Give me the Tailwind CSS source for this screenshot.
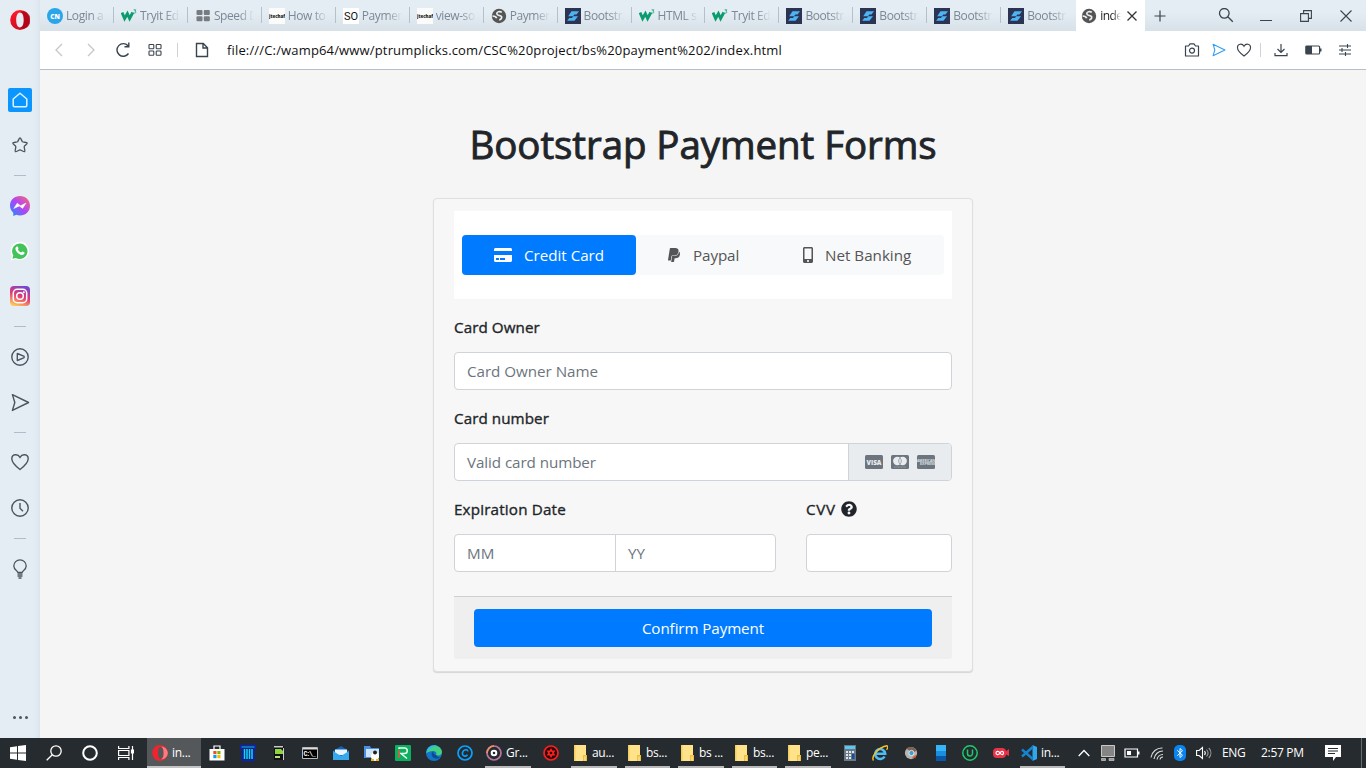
<!DOCTYPE html>
<html lang="en">
<head>
<meta charset="utf-8">
<title>index</title>
<script src="https://cdn.jsdelivr.net/npm/@tailwindcss/browser@4"></script>
</head>
<body class="w-[1366px] h-[768px] overflow-hidden flex flex-col bg-[#e5edf4] font-['Open_Sans','Noto_Sans',sans-serif] text-[#212529]">
<svg class="hidden">
  <symbol id="w3" viewBox="0 0 16 16"><path d="M1 4.500 3.600 10.500l2.800-4.800 2.200 4.800 3.200-6" fill="none" stroke="#0a9c6e" stroke-width="2.900"/><path d="M12.600 1.800h2.200l-1 1.300c1.400 0 1.400 2-.2 2-.6 0-1-.2-1.200-.6" fill="none" stroke="#0a9c6e" stroke-width=".8"/></symbol>
  <symbol id="globe" viewBox="0 0 16 16"><circle cx="8" cy="8" r="7.200" fill="#555"/><path d="M10.800 4.300c-2-1.200-5-.6-5 1.200 0 2 2.200 1.700 4 2.500 1.800 1 .8 3.500-1.600 3.800M1.500 8c2 0 3.800.6 4.200 2.300" fill="none" stroke="#e8edf2" stroke-width="1.700"/></symbol>
  <symbol id="bs" viewBox="0 0 16 16"><path d="M0 0h16v16H0z" fill="#2b3553"/><path d="M6.500 3.300h7.500L11.500 6.500H9.300L8 8.200H3.200zM8.300 8.200h4.700l-3.500 4.500H2.200l2-2.700H7z" fill="#4cb3f5"/></symbol>
  <symbol id="folder" viewBox="0 0 16 18"><path d="M1 1h12v16H1z" fill="#ffe28a"/><path d="M1 1h1.500v16H1z" fill="#f5cf5c"/><path d="M10 11h4v6h-4z" fill="#eebf3d"/><path d="M11.500 12.500h1V17h-1z" fill="#fff0b8"/></symbol>
  <symbol id="heart" viewBox="0 0 20 20"><path d="M10 17.500C6 14.500 1.800 11 1.800 6.800c0-4.800 6-5.400 8.200-1.500 2.200-3.900 8.200-3.300 8.200 1.500 0 4.200-4.200 7.700-8.200 10.700z" fill="none" stroke="currentColor" stroke-width="1.400"/></symbol>
  <symbol id="send" viewBox="0 0 20 20"><path d="M1.500 1.700 18.500 10l-17 8.300L4 10z" fill="none" stroke="currentColor" stroke-width="1.500" stroke-linejoin="round"/></symbol>
</svg>

<div class="flex h-[738px]">
  <!-- Sidebar -->
  <aside class="w-10 shrink-0 flex flex-col items-center bg-[#e5edf4] shadow-[inset_-6px_0_6px_-5px_#d5dfe8] text-[#4a5560]">
    <div class="h-[77px] pt-[10px]"><svg class="w-5 h-5" viewBox="0 0 20 20"><defs><linearGradient id="og" x1="0" y1="0" x2="0" y2="1"><stop offset="0" stop-color="#ff1b2d"/><stop offset="1" stop-color="#d00d1f"/></linearGradient></defs><path d="M10 0a9.800 10 0 1 0 0 20 9.800 10 0 0 0 0-20zm0 2.600c2.500 0 3.800 3.200 3.800 7.400s-1.300 7.400-3.800 7.400S6.200 14.200 6.200 10 7.500 2.600 10 2.600z" fill="url(#og)" fill-rule="evenodd"/><path d="M10 2.600c3 0 3.800 3.200 3.800 7.400S12.800 17.400 10 17.400c2 2 5 1.600 7 .2A10 10 0 0 0 17 2.400C15 .8 12 .6 10 2.600z" fill="#a00014" opacity=".7"/></svg></div>
    <div class="h-[46px] flex items-center"><svg class="w-6 h-6" viewBox="0 0 24 24"><rect width="24" height="24" rx="2" fill="#0b96ff"/><path d="M12 5.200 5.200 11v6.600c0 .8.400 1.200 1.200 1.200h11.200c.8 0 1.200-.4 1.200-1.200V11z" fill="none" stroke="#dff1ff" stroke-width="1.500" stroke-linejoin="round"/></svg></div>
    <div class="h-[44px] flex items-center"><svg class="w-[18px] h-[18px]" viewBox="0 0 20 20"><path d="M10 2c1 0 1.800 3.500 2.700 4.300.9.700 5 .6 5.300 1.500.3 1-3 3-3.300 4-.3 1.200 1.300 4.900.5 5.500-.9.600-4-1.900-5.200-1.900s-4.300 2.500-5.200 1.900c-.8-.6.800-4.300.5-5.500-.3-1-3.600-3-3.300-4 .3-.9 4.400-.8 5.300-1.500C8.200 5.500 9 2 10 2z" fill="none" stroke="currentColor" stroke-width="1.500" stroke-linejoin="round"/></svg></div>
    <div class="h-[16px] pt-[8px]"><div class="w-3 h-px bg-[#aebccc]"></div></div>
    <div class="h-[46px] flex items-center"><svg class="w-5 h-5" viewBox="0 0 20 20"><defs><linearGradient id="mg" x1="1" y1="0" x2="0" y2="1"><stop offset="0" stop-color="#ff6a6a"/><stop offset=".5" stop-color="#b045f5"/><stop offset="1" stop-color="#1590ff"/></linearGradient></defs><path d="M10 0C4.400 0 0 4 0 9.600c0 3 1.200 5.500 3.300 7.200V20l3-1.200c1.200.4 2.400.6 3.700.6 5.600 0 10-4 10-9.700S15.600 0 10 0z" fill="url(#mg)"/><path d="m3.800 12.500 3.400-5.300 3.300 2.500 5.500-2.600-3.400 5.300-3.300-2.500z" fill="#fff" stroke="#fff" stroke-width=".5"/></svg></div>
    <div class="h-[44px] flex items-center"><svg class="w-5 h-5" viewBox="0 0 20 20"><path d="M.8 19.400 2 14.700A9.200 9.200 0 1 1 5.500 18z" fill="#fff"/><path d="m2.400 17.800.9-3.400a7.700 7.700 0 1 1 2.600 2.500z" fill="#43c45a"/><path d="M7 5.500c.6-.3 1 .1 1.500 1.500.2.700-.7 1-.5 1.600.6 1.300 1.700 2.300 3.100 2.900.6.100.9-1.100 1.500-.9 1.700.8 2.100 1 2 1.500-.3 1.500-1.700 2.100-3 1.900-3-.6-5.900-3.400-6.200-6.200C5.400 6.700 6.200 5.700 7 5.500z" fill="#fff"/></svg></div>
    <div class="h-[45px] flex items-center"><svg class="w-5 h-5" viewBox="0 0 20 20"><defs><linearGradient id="ig" x1=".7" y1="0" x2=".3" y2="1"><stop offset="0" stop-color="#7346d0"/><stop offset=".5" stop-color="#e23a74"/><stop offset="1" stop-color="#ffc65c"/></linearGradient></defs><rect width="20" height="20" rx="4" fill="url(#ig)"/><g fill="none" stroke="#fff" stroke-width="1.500"><rect x="3.300" y="3.300" width="13.400" height="13.400" rx="3.800"/><circle cx="10" cy="10" r="3.300"/></g><circle cx="13.800" cy="6.200" r="1" fill="#fff"/></svg></div>
    <div class="h-[16px] pt-[8px]"><div class="w-3 h-px bg-[#aebccc]"></div></div>
    <div class="h-[45px] flex items-center"><svg class="w-5 h-5" viewBox="0 0 20 20" fill="none" stroke="currentColor" stroke-width="1.400"><circle cx="10" cy="10" r="8.200"/><path d="M7.300 6.500v7l6.400-2.700c.7-.4.7-1.200 0-1.600z" stroke-linejoin="round"/></svg></div>
    <div class="h-[46px] flex items-center"><svg class="w-[19px] h-[19px]"><use href="#send"/></svg></div>
    <div class="h-[15px] pt-[7px]"><div class="w-3 h-px bg-[#aebccc]"></div></div>
    <div class="h-[44px] flex items-center"><svg class="w-5 h-5"><use href="#heart"/></svg></div>
    <div class="h-[47px] flex items-center"><svg class="w-5 h-5" viewBox="0 0 20 20" fill="none" stroke="currentColor" stroke-width="1.400"><circle cx="10" cy="10" r="8.200"/><path d="M10 5v5.300l3 3"/></svg></div>
    <div class="h-[15px] pt-[7px]"><div class="w-3 h-px bg-[#aebccc]"></div></div>
    <div class="h-[46px] flex items-center"><svg class="w-5 h-5" viewBox="0 0 20 20" fill="none" stroke="currentColor" stroke-width="1.300"><path d="M7.800 13.300c0-1.300-4-2.500-4-6.300a6.200 6.200 0 0 1 12.400 0c0 3.800-4 5-4 6.300zM7.500 15h5M7.500 17h5M8.500 19h3"/></svg></div>
    <div class="mt-auto h-[41px] flex items-center gap-[3px]"><i class="size-[3px] rounded-full bg-[#4a5560]"></i><i class="size-[3px] rounded-full bg-[#4a5560]"></i><i class="size-[3px] rounded-full bg-[#4a5560]"></i></div>
  </aside>

  <div class="w-[1326px] flex flex-col">
    <!-- Tabs -->
    <div id="tabs" class="h-[31px] flex bg-linear-to-b from-[#e5edf4] from-40% to-[#d8e0e8] text-[12px] text-[#7b8895]"></div>

    <!-- Address bar -->
    <div class="h-[39px] bg-white border-b border-[#b4bfca] flex items-center text-[#3a444e]">
      <svg class="ml-[9px] w-5 h-5" viewBox="0 0 20 20"><path d="M13 4 7 10l6 6" fill="none" stroke="#c3c6ca" stroke-width="1.300"/></svg>
      <svg class="ml-[12px] w-5 h-5" viewBox="0 0 20 20"><path d="m7 4 6 6-6 6" fill="none" stroke="#c3c6ca" stroke-width="1.300"/></svg>
      <svg class="ml-[13px] w-[18px] h-[18px]" viewBox="0 0 18 18"><path d="M14.500 12.500A6.300 6.300 0 1 1 14 4.800M14.800 1.500v4.300h-4.300" fill="none" stroke="currentColor" stroke-width="1.400"/></svg>
      <svg class="ml-[16px] w-[14px] h-[14px]" viewBox="0 0 14 14" fill="none" stroke="currentColor" stroke-width="1.100"><rect x="1" y="1.500" width="4.800" height="4.300" rx=".8"/><rect x="8.200" y="1.500" width="4.800" height="4.300" rx=".8"/><rect x="1" y="8" width="4.800" height="4.300" rx=".8"/><rect x="8.200" y="8" width="4.800" height="4.300" rx=".8"/></svg>
      <div class="ml-[15px] w-px h-[14px] bg-[#cfd3d7]"></div>
      <svg class="ml-[17px] w-[14px] h-4" viewBox="0 0 14 16"><path d="M1.500 1.500h6.800l4.200 4.200v8.800h-11zM8 1.500V6h4.500" fill="none" stroke="currentColor" stroke-width="1.400"/></svg>
      <span class="ml-[18px] pt-0.5 text-[13px] tracking-[0.159px] text-[#111] whitespace-nowrap">file:///C:/wamp64/www/ptrumplicks.com/CSC%20project/bs%20payment%202/index.html</span>
      <div class="ml-auto flex items-center mr-[14px]">
        <svg class="w-4 h-4" viewBox="0 0 16 16" fill="none" stroke="currentColor" stroke-width="1.200"><path d="M1.500 4h3L6 1.800h4L11.500 4h3v10h-13z" stroke-linejoin="round"/><circle cx="8" cy="8.600" r="2.500"/></svg>
        <svg class="ml-[12px] w-[14px] h-[14px] text-[#2f9df5]"><use href="#send"/></svg>
        <svg class="ml-[10px] w-4 h-4"><use href="#heart"/></svg>
        <div class="ml-[8px] w-px h-[14px] bg-[#cfd3d7]"></div>
        <svg class="ml-[12px] w-4 h-4" viewBox="0 0 16 16" fill="none" stroke="currentColor" stroke-width="1.200"><path d="M8 2v8M4.500 7 8 10.500 11.500 7M2 11v2.700h12V11"/></svg>
        <svg class="ml-[16px] w-[17px] h-[10px]" viewBox="0 0 17 10"><rect x=".8" y="1" width="13.800" height="8" rx="1" fill="none" stroke="#3a444e" stroke-width="1.200"/><path d="M1 1h6v8H1zM15 3.500h1.500v3H15z" fill="#3a444e"/></svg>
        <svg class="ml-[16px] w-[14px] h-[14px]" viewBox="0 0 14 14" fill="none" stroke="currentColor" stroke-width="1.100"><path d="M1 3h12M1 7h12M1 11h12M9.500 1v4M4 5v4M7.500 9v4"/></svg>
      </div>
    </div>

    <!-- Page -->
    <main class="h-[668px] bg-[#f5f5f5] flex flex-col items-center text-[15.2px] leading-6">
      <h1 class="mt-[50px] h-12 leading-[48px] text-[38.5px] tracking-[-0.08px] [-webkit-text-stroke:0.9px_#212529] whitespace-nowrap">Bootstrap Payment Forms</h1>
      <section class="mt-[30px] w-[540px] h-[474px] rounded border border-[#dfdfdf] bg-[#f7f7f7] shadow-[0_1px_1px_#0002] px-5 py-3 flex flex-col">
        <div class="h-[88px] bg-white px-2 pt-6 shrink-0">
          <div class="h-10 rounded bg-[#f8f9fa] flex text-[#555]">
            <div class="w-[174px] rounded bg-[#007bff] text-white flex items-center">
              <svg class="ml-[32px] w-[18px] h-4" viewBox="0 0 576 512" fill="currentColor"><path d="M0 432c0 26.500 21.500 48 48 48h480c26.500 0 48-21.500 48-48V256H0v176zm192-68c0-6.600 5.400-12 12-12h136c6.600 0 12 5.400 12 12v40c0 6.600-5.400 12-12 12H204c-6.600 0-12-5.400-12-12v-40zm-128 0c0-6.600 5.400-12 12-12h72c6.600 0 12 5.400 12 12v40c0 6.600-5.400 12-12 12H76c-6.600 0-12-5.400-12-12v-40zM576 80v48H0V80c0-26.500 21.500-48 48-48h480c26.500 0 48 21.500 48 48z"/></svg>
              <span class="ml-[12px] tracking-[-0.02px]">Credit Card</span>
            </div>
            <div class="w-[134px] flex items-center">
              <svg class="ml-[32px] w-3 h-4" viewBox="0 0 384 512" fill="currentColor"><path d="M111.400 295.900c-3.500 19.200-17.400 108.700-21.500 134-.3 1.800-1 2.500-3 2.500H12.300c-7.600 0-13.100-6.600-12.100-13.900L58.800 46.600c1.500-9.600 10.100-16.900 20-16.900 152.300 0 165.100-3.700 204 11.400 60.100 23.300 65.600 79.500 44 140.300-21.500 62.600-72.500 89.500-140.100 90.300-43.400.7-69.500-7-75.300 24.200zM357.100 152c-1.800-1.300-2.500-1.800-3 1.300-2 11.400-5.100 22.500-8.800 33.600-39.900 113.800-150.500 103.900-204.500 103.900-6.100 0-10.100 3.300-10.900 9.400-22.600 140.400-27.100 169.700-27.100 169.700-1 7.100 3.500 12.900 10.600 12.900h63.500c8.600 0 15.700-6.300 17.400-14.900.7-5.400-1.100 6.100 14.400-91.300 4.600-22 14.300-19.700 29.300-19.700 71 0 126.400-28.800 142.900-112.300 6.500-34.800 4.600-71.400-23.800-92.600z"/></svg>
              <span class="ml-[13px] tracking-[-0.1px]">Paypal</span>
            </div>
            <div class="flex items-center">
              <svg class="ml-[33px] w-[10px] h-4" viewBox="0 0 320 512" fill="currentColor"><path d="M272 0H48C21.500 0 0 21.500 0 48v416c0 26.500 21.500 48 48 48h224c26.500 0 48-21.500 48-48V48c0-26.500-21.500-48-48-48zM160 480c-17.700 0-32-14.300-32-32s14.300-32 32-32 32 14.300 32 32-14.300 32-32 32zm112-108c0 6.600-5.400 12-12 12H60c-6.600 0-12-5.400-12-12V60c0-6.600 5.400-12 12-12h200c6.600 0 12 5.400 12 12v312z"/></svg>
              <span class="ml-[12px] whitespace-nowrap">Net Banking</span>
            </div>
          </div>
        </div>
        <label class="mt-4 tracking-[0.08px] [-webkit-text-stroke:0.35px_#212529]">Card Owner</label>
        <div class="mt-[13px] h-[38px] shrink-0 rounded border border-[#ced4da] bg-white flex items-center pl-3 text-[#6c757d]"><span class="tracking-[-0.03px]">Card Owner Name</span></div>
        <label class="mt-4 tracking-[0.07px] [-webkit-text-stroke:0.35px_#212529]">Card number</label>
        <div class="mt-[13px] h-[38px] shrink-0 rounded border border-[#ced4da] bg-white flex items-center pl-3 text-[#6c757d]"><span class="tracking-[-0.08px]">Valid card number</span>
          <div class="ml-auto w-[103px] h-full bg-[#e9ecef] border-l border-[#ced4da] rounded-r-[3px] flex items-center gap-2 pl-4">
            <svg class="w-[18px] h-[14px]" viewBox="0 0 18 14"><rect width="18" height="14" rx="1.500" fill="#6c757d"/><text x="9" y="9.600" text-anchor="middle" font-family="Open Sans" font-size="6.800" font-weight="800" textLength="15" lengthAdjust="spacingAndGlyphs" fill="#e9ecef">VISA</text></svg>
            <svg class="w-[18px] h-[14px]" viewBox="0 0 18 14"><rect width="18" height="14" rx="1.500" fill="#6c757d"/><circle cx="6.300" cy="6" r="4.200" fill="#e9ecef"/><circle cx="11.700" cy="6" r="4.200" fill="#e9ecef"/><path d="M9 3c-1.800 1.800-1.800 4.200 0 6 1.800-1.800 1.800-4.200 0-6z" fill="none" stroke="#8a929a" stroke-width=".8"/><path d="M3 12h12" stroke="#a5acb2" stroke-width=".8" stroke-dasharray="1 .4"/></svg>
            <svg class="w-[18px] h-[14px]" viewBox="0 0 18 14"><rect width="18" height="14" rx="1.500" fill="#6c757d"/><text x="0" y="6.500" font-family="Open Sans" font-size="3.600" font-weight="700" textLength="18" lengthAdjust="spacingAndGlyphs" fill="#dfe3e6">AMERICAN</text><text x="3" y="10" font-family="Open Sans" font-size="3.600" font-weight="700" textLength="15" lengthAdjust="spacingAndGlyphs" fill="#dfe3e6">EXPRESS</text></svg>
          </div>
        </div>
        <div class="mt-4 flex gap-[30px]">
          <div class="w-[322px]">
            <label class="block tracking-[0.18px] [-webkit-text-stroke:0.35px_#212529]">Expiration Date</label>
            <div class="mt-[13px] h-[38px] rounded border border-[#ced4da] bg-white flex text-[#6c757d] leading-[37px]">
              <div class="w-[161px] pl-3 border-r border-[#ced4da]">MM</div><div class="pl-3">YY</div>
            </div>
          </div>
          <div class="w-[146px]">
            <label class="flex items-center gap-[5px] tracking-[0.75px]"><span class="[-webkit-text-stroke:0.35px_#212529]">CVV</span><svg class="w-4 h-4" viewBox="0 0 512 512" fill="currentColor"><path d="M504 256c0 136.997-111.043 248-248 248S8 392.997 8 256C8 119.083 119.043 8 256 8s248 111.083 248 248zM262.655 90c-54.497 0-89.255 22.957-116.549 63.758-3.536 5.286-2.353 12.415 2.715 16.258l34.699 26.310c5.205 3.947 12.621 3.008 16.665-2.122 17.864-22.658 30.113-35.797 57.303-35.797 20.429 0 45.698 13.148 45.698 32.958 0 14.976-12.363 22.667-32.534 33.976C247.128 238.528 216 254.941 216 296v4c0 6.627 5.373 12 12 12h56c6.627 0 12-5.373 12-12v-1.333c0-28.462 83.186-29.647 83.186-106.667 0-58.002-60.165-102-116.531-102zM256 338c-25.365 0-46 20.635-46 46 0 25.364 20.635 46 46 46s46-20.636 46-46c0-25.365-20.635-46-46-46z"/></svg></label>
            <div class="mt-[13px] h-[38px] rounded border border-[#ced4da] bg-white"></div>
          </div>
        </div>
        <div class="mt-6 h-[63px] shrink-0 bg-[#efefef] border-t border-[#cfcfcf] rounded-b-[3px] px-5 pt-3">
          <div class="h-[38px] rounded bg-[#007bff] text-white text-center leading-[38px] tracking-[-0.1px]">Confirm Payment</div>
        </div>
      </section>
    </main>
  </div>
</div>

<!-- Taskbar -->
<footer class="h-[30px] bg-[#262b30] flex items-center text-white text-[12px] tracking-[-0.3px]">
  <div class="w-9 flex justify-center"><svg class="w-4 h-4" viewBox="0 0 16 16" fill="#fff"><path d="M0 2.200 7 1.200v6.300H0zM8 1l8-1v7.500H8zM0 8.500h7v6.300l-7-1zM8 8.500h8V16l-8-1.100z"/></svg></div>
  <div class="w-9 flex justify-center"><svg class="w-4 h-4" viewBox="0 0 16 16" fill="none" stroke="#fff" stroke-width="1.300"><circle cx="10" cy="6" r="5.200"/><path d="M6.300 9.700.7 15.300"/></svg></div>
  <div class="w-9 flex justify-center"><svg class="w-4 h-4" viewBox="0 0 16 16"><circle cx="8" cy="8" r="6.800" fill="none" stroke="#fff" stroke-width="2"/></svg></div>
  <div class="w-9 flex justify-center"><svg class="w-4 h-4" viewBox="0 0 16 16" fill="none" stroke="#fff" stroke-width="1.200"><path d="M.6 1v2.500h10.300V1M.6 15v-2.500h10.300V15M.6 5.500v5h10.300v-5zM14.500 1v14"/><path d="M13.500 5h2v3h-2z" fill="#fff"/></svg></div>
  <div class="ml-[3px] w-[54px] h-full bg-[#55585b] border-b-2 border-[#c4c4c4] flex items-center pl-[5px] pt-0.5"><svg class="w-4 h-4" viewBox="0 0 16 16"><path d="M8 0a7.800 8 0 1 0 0 16A7.800 8 0 0 0 8 0zm.8 2c2 0 2.800 2.700 2.800 6s-.8 6-2.800 6S6 11.300 6 8s.8-6 2.800-6z" fill="#f0242f" fill-rule="evenodd"/><path d="M9 2c2 .3 2.600 2.700 2.600 6S11 13.700 9 14c2 1.200 6.800-1.500 6.800-6S11 .8 9 2z" fill="#ff7a7d"/></svg><span class="ml-1">in...</span></div>
  <div class="w-[31px] flex justify-center"><svg class="w-4 h-4" viewBox="0 0 16 16"><path d="M5 4V1h6v3" fill="none" stroke="#fff" stroke-width="1.200"/><path d="M.5 4h15v11.500H.5z" fill="#fff"/><path d="M4.300 6h3.200v3.200H4.300z" fill="#f25022"/><path d="M8.300 6h3.200v3.200H8.300z" fill="#7fba00"/><path d="M4.300 10h3.200v3.200H4.300z" fill="#00a4ef"/><path d="M8.300 10h3.200v3.200H8.300z" fill="#ffb900"/></svg></div>
  <div class="w-[31px] flex justify-center"><svg class="w-4 h-4" viewBox="0 0 16 16"><path d="M.5.500h15v3H14V15.500H2V3.500H.500z" fill="#06267a" stroke="#0b1fd0"/><path d="M4.500 4v10M7 4v10M9.500 4v10M12 4v10" stroke="#19d3f5" stroke-width="1.500"/><path d="M1.500 2h13" stroke="#19b8f5"/></svg></div>
  <div class="w-[31px] flex justify-center"><svg class="w-4 h-4" viewBox="0 0 16 16"><path d="M3 1h10v14H3z" fill="#111"/><path d="M4 4h6l2 2v3H4z" fill="#8dd63f"/><path d="M4 11h5v2H4z" fill="#b5e07a"/><path d="M3 1h9v1.500H3zM12 3h1v12h-1z" fill="#ccc"/></svg></div>
  <div class="w-[31px] flex justify-center"><svg class="w-4 h-4" viewBox="0 0 16 16"><path d="M.5 2.500h15v11H.5z" fill="#000" stroke="#bbb"/><path d="M1 3h14v1.500H1z" fill="#ddd"/><text x="1.500" y="11" font-family="Liberation Mono" font-size="6.500" font-weight="700" textLength="12" fill="#fff">C:\_</text></svg></div>
  <div class="w-[31px] flex justify-center"><svg class="w-4 h-4" viewBox="0 0 16 16"><path d="M0 6 8 1l8 5v9H0z" fill="#0d63b5"/><path d="M2 4.500h12V10H2z" fill="#e9f4fc"/><path d="m0 6 8 5 8-5v9H0z" fill="#36a9ee"/></svg></div>
  <div class="w-[31px] flex justify-center"><svg class="w-4 h-4" viewBox="0 0 16 16"><path d="M0 1h6l1 2h8v10H0z" fill="#4b8fe0"/><path d="M2 4h13v8H2z" fill="#cfe3fa"/><ellipse cx="11" cy="11.500" rx="4" ry="4.500" fill="#fff"/><circle cx="11" cy="7.500" r="2" fill="#222"/><path d="M7 14h3v2H7zM12 14h3v2h-3z" fill="#f2b71d"/></svg></div>
  <div class="w-[31px] flex justify-center"><svg class="w-4 h-4" viewBox="0 0 16 16"><rect width="16" height="16" rx="1" fill="#0caf60"/><path d="M4 4V3h5.500a2.700 2.700 0 0 1 0 5.500H6l6 5" fill="none" stroke="#e8fff0" stroke-width="1.500"/><path d="M4 5v8" stroke="#e8563c" stroke-width="1.500"/></svg></div>
  <div class="w-[31px] flex justify-center"><svg class="w-4 h-4" viewBox="0 0 16 16"><circle cx="8" cy="8" r="8" fill="#1375c8"/><path d="M1 5C4-1 15-1 16 7c0 3-3 4-6 3 1-2 0-4-3-4S2 7 0 8z" fill="#43d17c"/><path d="M1 5C3 0 9-1 12 1.500 8 1 4 2 1 8z" fill="#32b9e8"/><path d="M10 10c-2-.5-3-2-2.500-3.500C5 7 5 11 8 13c2 1 5 .8 6-.8-2 .2-3-.7-4-2.200z" fill="#0c4a94"/></svg></div>
  <div class="w-[31px] flex justify-center"><svg class="w-4 h-4" viewBox="0 0 16 16" fill="none" stroke="#0aa2ff"><circle cx="8" cy="8" r="7" stroke-width="1.700"/><path d="M11 6.300C10.500 4 6.500 4 5.500 7.500c-.8 4 3.500 4.500 5 2.300" stroke-width="1.600"/></svg></div>
  <div class="ml-[5px] w-[46px] h-full border-b-2 border-[#b9b9b9] flex items-center pl-px pt-0.5"><svg class="w-4 h-4" viewBox="0 0 16 16"><circle cx="8" cy="8" r="7" fill="none" stroke="#b974a0" stroke-width="1.700"/><path d="M1 8a7 7 0 0 1 7-7" fill="none" stroke="#f09060" stroke-width="1.700"/><circle cx="8" cy="8" r="2.300" fill="none" stroke="#fff" stroke-width="2"/></svg><span class="ml-1">Gr...</span></div>
  <div class="ml-[4px] w-[32px] flex justify-center"><svg class="w-4 h-4" viewBox="0 0 16 16"><circle cx="8" cy="8" r="7" fill="#250508" stroke="#fb2020" stroke-width="1.700"/><path d="m8 3 1.500 2.400 2.800.1L11 8l1.300 2.500-2.800.1L8 13l-1.500-2.400-2.800-.1L5 8 3.700 5.500l2.800-.1z" fill="#fb2020"/><circle cx="8" cy="8" r="1.300" fill="#250508"/></svg></div>
  <div class="ml-[4px] w-[46px] h-full border-b-2 border-[#b9b9b9] flex items-center pl-[2px] pt-0.5"><svg class="w-4 h-[18px]"><use href="#folder"/></svg><span class="ml-[3px]">au...</span></div>
  <div class="ml-[8px] w-[45px] h-full border-b-2 border-[#b9b9b9] flex items-center pl-[2px] pt-0.5"><svg class="w-4 h-[18px]"><use href="#folder"/></svg><span class="ml-[3px]">bs...</span></div>
  <div class="ml-[8px] w-[46px] h-full border-b-2 border-[#b9b9b9] flex items-center pl-[2px] pt-0.5"><svg class="w-4 h-[18px]"><use href="#folder"/></svg><span class="ml-[3px] whitespace-nowrap">bs ...</span></div>
  <div class="ml-[8px] w-[45px] h-full border-b-2 border-[#b9b9b9] flex items-center pl-[2px] pt-0.5"><svg class="w-4 h-[18px]"><use href="#folder"/></svg><span class="ml-[3px]">bs...</span></div>
  <div class="ml-[8px] w-[46px] h-full border-b-2 border-[#b9b9b9] flex items-center pl-[2px] pt-0.5"><svg class="w-4 h-[18px]"><use href="#folder"/></svg><span class="ml-[3px]">pe...</span></div>
  <div class="ml-[3px] w-[31px] flex justify-center"><svg class="w-4 h-4" viewBox="0 0 16 16"><path d="M2 0h12v16H2z" fill="#6a7885"/><path d="M3 1h10v3H3z" fill="#5ac8f0"/><path d="M4 6h2v2H4zM7 6h2v2H7zM10 6h2v2h-2zM4 9h2v2H4zM7 9h2v2H7zM4 12h2v2H4zM7 12h2v2H7z" fill="#e0e6ea"/><path d="M10 9h2.500v5H10z" fill="#1c4a9c"/></svg></div>
  <div class="w-[30px] flex justify-center"><svg class="w-4 h-4" viewBox="0 0 16 16"><path d="M12.600 11.500A5 5 0 1 1 13.200 8.700H4.500" fill="none" stroke="#4fbdf3" stroke-width="2.500"/><path d="M1.500 15.500C-1 12 6 2 15 .8c1.500.5.5 3-.5 4" fill="none" stroke="#f6c325" stroke-width="1.400"/></svg></div>
  <div class="w-[31px] flex justify-center"><svg class="w-[14px] h-[14px]" viewBox="0 0 16 16"><circle cx="8" cy="8" r="7" fill="#b9b4ae"/><path d="M3 3c3-3 9-2 11 2l-3 3-4-2z" fill="#7d6250"/><circle cx="8.500" cy="8" r="3" fill="#3d9fd1" stroke="#eee"/><path d="M9 13l5-3-1 4z" fill="#d15b2a"/></svg></div>
  <div class="w-[29px] flex justify-center"><svg class="w-[10px] h-4" viewBox="0 0 10 16"><path d="M0 0h10v16H0z" fill="#35b5f5"/><path d="M0 6h10v5H0z" fill="#1a8fe0"/><path d="M0 11h10v5H0z" fill="#0c56a8"/></svg></div>
  <div class="w-[30px] flex justify-center"><svg class="w-4 h-4" viewBox="0 0 16 16" fill="none" stroke="#1ecb6b" stroke-width="1.500"><circle cx="8" cy="8" r="7.200"/><path d="M5.500 4.500v4a2.500 2.500 0 0 0 5 0v-4"/></svg></div>
  <div class="w-[31px] flex justify-center"><svg class="w-4 h-4" viewBox="0 0 16 16"><rect y="3" width="13" height="10" rx="4" fill="#ea3348"/><path d="m12 7 4-3v7l-4-2z" fill="#ea3348"/><path d="M7 8c-1.500-2.500-4-1.800-4 0s2.500 2.500 4 0 3.500-1.800 3.500 0-2 2.300-3.500 0z" fill="none" stroke="#fff" stroke-width="1.200"/></svg></div>
  <div class="ml-[4px] w-[45px] h-full border-b-2 border-[#b9b9b9] flex items-center pl-px pt-0.5"><svg class="w-4 h-4" viewBox="0 0 16 16"><path d="m11.500 0 4.500 2v12l-4.500 2z" fill="#2fa6ee"/><path d="M11.800 2 1 11.500M11.800 14 1 4.500" stroke="#1583cf" stroke-width="2.400"/></svg><span class="ml-1">in...</span></div>
  <div class="ml-[7px] w-6 flex justify-center"><svg class="w-3 h-3" viewBox="0 0 12 12"><path d="M.7 9 6 3.500 11.300 9" fill="none" stroke="#fff" stroke-width="1.300"/></svg></div>
  <div class="w-6 flex justify-center"><svg class="w-4 h-4" viewBox="0 0 16 16"><path d="M1.500.500h13v11h-13z" fill="#858585" stroke="#c8c8c8"/><path d="M1.500 13.500h4v2h-4zM9 13.500h5v2H9z" fill="#999" stroke="#ccc" stroke-width=".7"/></svg></div>
  <div class="w-6 flex justify-center"><svg class="w-4 h-4" viewBox="0 0 16 16"><path d="M1 4h12.500v8H1z" fill="none" stroke="#fff" stroke-width="1.200"/><path d="M3 6h4v4H3zM14 6.500h1.500v3H14z" fill="#fff"/></svg></div>
  <div class="w-[25px] flex justify-center"><svg class="w-[14px] h-[14px]" viewBox="0 0 14 14" fill="none" stroke="#ddd"><path d="M1 11.500A11 11 0 0 1 12.500 2M4 13A9 9 0 0 1 13 5M7 13.500A6 6 0 0 1 13 8.500M10 13.500a3 3 0 0 1 3-2.500" stroke-width="1.100"/></svg></div>
  <div class="w-[22px] flex justify-center"><svg class="w-3 h-4" viewBox="0 0 12 16"><rect width="12" height="16" rx="5" fill="#0a84f0"/><path d="m3.300 5.300 5.200 5L6 12.500v-9l2.500 2.200-5.200 5" fill="none" stroke="#fff" stroke-width="1"/></svg></div>
  <div class="w-[26px] flex justify-center"><svg class="w-4 h-4" viewBox="0 0 16 16" fill="none" stroke="#fff" stroke-width="1.100"><path d="M.6 5.500h2.500L6.500 2.500v11L3.100 10.500H.6zM8.500 6c.8 1 .8 3 0 4"/><path d="M10.500 4.500c1.800 2 1.800 5 0 7M12.800 3c2.800 3 2.800 7 0 10" stroke="#999"/></svg></div>
  <span class="ml-[5px] w-[39px] shrink-0">ENG</span>
  <span class="w-[73px] shrink-0 whitespace-nowrap">2:57 PM</span>
  <svg class="-ml-[9px] w-4 h-4" viewBox="0 0 16 16"><path d="M0 0h16v12h-5l-3 4V12H0z" fill="#fff"/><path d="M3 3.500h10M3 6h10M3 8.500h7" stroke="#262b30" stroke-width="1.100"/></svg>
  <div class="ml-auto mr-[4px] w-px h-full bg-[#6a6d70]"></div>
</footer>

<script>
const tabs = document.getElementById('tabs');
const use = id => `<svg class="w-4 h-4 shrink-0"><use href="#${id}"/></svg>`;
const icons = {
  cn: '<svg class="w-4 h-4 shrink-0" viewBox="0 0 16 16"><circle cx="8" cy="8" r="8" fill="#2ba5ea"/><text x="8" y="10.500" text-anchor="middle" font-family="Open Sans" font-size="6.500" font-weight="800" fill="#fff">CN</text></svg>',
  dial: '<svg class="w-4 h-4 shrink-0" viewBox="0 0 16 16" fill="#777c80"><rect x="1.500" y="2" width="6" height="5" rx="1"/><rect x="8.800" y="2" width="6" height="5" rx="1"/><rect x="1.500" y="8.300" width="6" height="5" rx="1"/><rect x="8.800" y="8.300" width="6" height="5" rx="1"/></svg>',
  chef: '<svg class="w-4 h-4 shrink-0" viewBox="0 0 16 16"><path d="M0 0h16v16H0z" fill="#fbfbfb"/><text x="0" y="10" textLength="16" lengthAdjust="spacingAndGlyphs" font-family="Open Sans" font-size="4.500" font-weight="800" fill="#222">jtechaf</text></svg>',
  so: '<svg class="w-4 h-4 shrink-0" viewBox="0 0 16 16"><path d="M0 0h16v16H0z" fill="#fff"/><text x="1" y="12" textLength="14" font-family="Roboto" font-size="11" fill="#111">SO</text></svg>',
};
[['cn','Login a'],['w3','Tryit Edi'],['dial','Speed D'],['chef','How to'],['so','Paymen'],['chef','view-so'],['globe','Paymen'],['bs','Bootstra'],['w3','HTML s'],['w3','Tryit Edi'],['bs','Bootstra'],['bs','Bootstra'],['bs','Bootstra'],['bs','Bootstra']].forEach(([ic, t], i) => {
  tabs.insertAdjacentHTML('beforeend', `<div class="w-[73.95px] shrink-0 flex items-center pl-[7px] h-full relative">${icons[ic] || use(ic)}<span class="ml-[3px] w-[42px] whitespace-nowrap tracking-[-0.4px] mask-r-from-60% mask-r-to-95%">${t}</span>${i < 13 ? '<i class="absolute right-0 top-[7px] h-4 w-px bg-[#b4c0cc]"></i>' : ''}</div>`);
});
tabs.insertAdjacentHTML('beforeend', `<div class="ml-[1px] w-[69px] shrink-0 h-full bg-white flex items-center pl-[5px]">${use('globe')}<span class="ml-[3px] w-[21px] whitespace-nowrap tracking-[-0.5px] text-[#222] mask-r-from-60% mask-r-to-100%">inde</span><svg class="ml-[5px] w-3 h-3" viewBox="0 0 12 12"><path d="m1.500 1.500 9 9m0-9-9 9" stroke="#333" stroke-width="1.300"/></svg></div>
<div class="flex-1 flex items-center text-[#3a444e]"><svg class="ml-[9px] w-3 h-3" viewBox="0 0 12 12"><path d="M6 .5v11M.5 6h11" stroke="currentColor" stroke-width="1.200"/></svg>
<svg class="ml-[52px] w-4 h-4" viewBox="0 0 16 16" fill="none" stroke="currentColor" stroke-width="1.300"><circle cx="6.300" cy="5.300" r="4.800"/><path d="m9.800 8.800 5 5"/></svg>
<svg class="ml-[26px] w-3 h-3" viewBox="0 0 12 12"><path d="M0 10.500h12" stroke="currentColor" stroke-width="1"/></svg>
<svg class="ml-[28px] w-3 h-3" viewBox="0 0 12 12" fill="none" stroke="currentColor" stroke-width="1.100"><path d="M.6 3.600h7.800v7.800H.6zM3.600 3.500V.6h7.800v7.800H8.500"/></svg>
<svg class="ml-[28px] w-3 h-3" viewBox="0 0 12 12"><path d="m.5.500 11 11m0-11-11 11" stroke="currentColor" stroke-width="1.100"/></svg></div>`);
</script>
</body>
</html>
